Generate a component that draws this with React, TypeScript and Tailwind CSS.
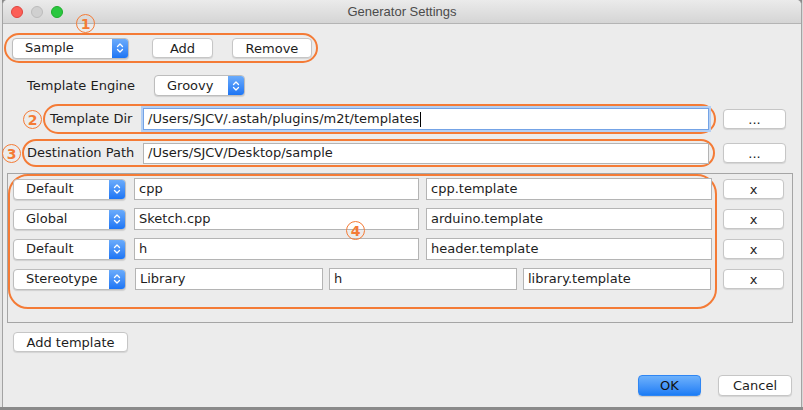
import React from 'react'

const ui = { fontFamily: '"DejaVu Sans", Verdana, sans-serif' }

function Mark({ n, className }: { n: string; className: string }) {
  return (
    <div className={`absolute w-[19px] h-[19px] rounded-full border-[1.5px] border-[#f47b36] text-[#f47b36] flex items-center justify-center text-[14px] font-bold leading-none ${className}`}>
      {n}
    </div>
  )
}

function Combo({ label, w }: { label: string; w: string }) {
  return (
    <div className={`${w} h-[21px] flex rounded-[4px] border border-[#bdbdbd] bg-white shadow-[0_1px_1px_rgba(0,0,0,0.12)] overflow-hidden`}>
      <div className="flex-1 flex items-center pl-[12px] text-[#1d1d1d]">{label}</div>
      <div className="w-[16px] flex items-center justify-center bg-gradient-to-b from-[#6aabfb] to-[#1c75f4]">
        <svg width="8" height="12" viewBox="0 0 8 12">
          <path d="M1.5 4.5 L4 2 L6.5 4.5 M1.5 7.5 L4 10 L6.5 7.5" fill="none" stroke="white" strokeWidth="1.3" strokeLinecap="round" strokeLinejoin="round" />
        </svg>
      </div>
    </div>
  )
}

function Btn({ children, w, h = 'h-[20px]' }: { children: React.ReactNode; w: string; h?: string }) {
  return (
    <button className={`${w} ${h} shrink-0 rounded-[4px] border border-[#c6c6c6] bg-white shadow-[0_1px_1px_rgba(0,0,0,0.1)] text-[#1d1d1d] flex items-center justify-center leading-none`}>
      {children}
    </button>
  )
}

function Field({ value, w, ml = '' }: { value: string; w: string; ml?: string }) {
  return (
    <div className={`${w} ${ml} h-[22px] shrink-0 border border-[#b4b4b4] bg-white flex items-center pl-[4px] text-[#1d1d1d] whitespace-nowrap overflow-hidden`}>
      {value}
    </div>
  )
}

const rows = [
  { kind: 'Default', cols: ['cpp', 'cpp.template'] },
  { kind: 'Global', cols: ['Sketch.cpp', 'arduino.template'] },
  { kind: 'Default', cols: ['h', 'header.template'] },
]

export default function App() {
  return (
    <div className="w-[803px] h-[410px] bg-[#8a8a8a] flex flex-col text-[13px]" style={ui}>
      <div className="flex h-[407px]">
        <div className="w-[2px] bg-[#e4e4e4]" />
        <div className="relative w-[800px] border-x border-[#a3a3a3] bg-[#ececec] rounded-t-[5px] flex flex-col">
          {/* title bar */}
          <div className="h-[24px] shrink-0 border-b border-[#b4b4b4] rounded-t-[5px] bg-gradient-to-b from-[#ebebeb] to-[#d5d5d5] flex items-center relative">
            <div className="flex gap-[8px] pl-[8px]">
              <div className="w-[12px] h-[12px] rounded-full bg-[#fc5f57] border border-[#e0443e]" />
              <div className="w-[12px] h-[12px] rounded-full bg-[#d0d0d0] border border-[#bcbcbc]" />
              <div className="w-[12px] h-[12px] rounded-full bg-[#2ac73f] border border-[#1dad2b]" />
            </div>
            <div className="absolute inset-0 flex items-center justify-center text-[13px] text-[#4b4b4b]" style={{ fontFamily: '"Liberation Sans", Arial, sans-serif' }}>
              Generator Settings
            </div>
          </div>

          {/* profile row */}
          <div className="mt-[9px] ml-[1px] w-[314px] h-[30px] rounded-[15px] border-2 border-[#f47b36] flex items-center pl-[6px]">
            <Combo label="Sample" w="w-[117px]" />
            <div className="ml-[23px]"><Btn w="w-[61px]">Add</Btn></div>
            <div className="ml-[19px]"><Btn w="w-[80px]">Remove</Btn></div>
          </div>

          {/* template engine */}
          <div className="mt-[12px] h-[21px] flex items-center pl-[24px]">
            <div className="w-[127px] text-[#1d1d1d]">Template Engine</div>
            <Combo label="Groovy" w="w-[91px]" />
          </div>

          {/* template dir */}
          <div className="mt-[8px] flex items-center">
            <div className="ml-[40px] w-[673px] h-[30px] rounded-[15px] border-2 border-[#f47b36] flex items-center pl-[5px]">
              <div className="w-[93px] text-[#1d1d1d]">Template Dir</div>
              <div className="w-[566px] h-[22px] border border-[#74a3e6] shadow-[0_0_0_2px_#b3cff4] bg-white flex items-center pl-[4px] text-[#1d1d1d] whitespace-nowrap">
                /Users/SJCV/.astah/plugins/m2t/templates
                <span className="inline-block w-px h-[15px] bg-black ml-px" />
              </div>
            </div>
            <div className="ml-[7px]"><Btn w="w-[63px]">...</Btn></div>
          </div>

          {/* destination path */}
          <div className="mt-[5px] flex items-center">
            <div className="ml-[19px] w-[693px] h-[28px] rounded-[14px] border-2 border-[#f47b36] flex items-center pl-[3px]">
              <div className="w-[116px] text-[#1d1d1d]">Destination Path</div>
              <div className="w-[566px] h-[21px] border border-[#b4b4b4] bg-white flex items-center pl-[4px] text-[#1d1d1d] whitespace-nowrap">
                /Users/SJCV/Desktop/sample
              </div>
            </div>
            <div className="ml-[8px]"><Btn w="w-[63px]">...</Btn></div>
          </div>

          {/* templates table */}
          <div className="mt-[6px] ml-[4px] w-[786px] h-[150px] border border-[#a5a5a5] flex">
            <div className="w-[709px] h-[135px] rounded-[20px] border-2 border-[#f47b36] pt-[2px] pl-[3px] flex flex-col gap-[8px]">
              {rows.map((r, i) => (
                <div key={i} className="h-[22px] flex items-center">
                  <Combo label={r.kind} w="w-[113px]" />
                  <Field value={r.cols[0]} w="w-[285px]" ml="ml-[8px]" />
                  <Field value={r.cols[1]} w="w-[286px]" ml="ml-[7px]" />
                </div>
              ))}
              <div className="h-[22px] flex items-center">
                <Combo label="Stereotype" w="w-[113px]" />
                <Field value="Library" w="w-[188px]" ml="ml-[9px]" />
                <Field value="h" w="w-[188px]" ml="ml-[6px]" />
                <Field value="library.template" w="w-[188px]" ml="ml-[6px]" />
              </div>
            </div>
            <div className="ml-[6px] pt-[5px] flex flex-col gap-[10px]">
              {[0, 1, 2, 3].map(i => (
                <Btn key={i} w="w-[61px]">x</Btn>
              ))}
            </div>
          </div>

          <div className="mt-[9px] ml-[10px]">
            <Btn w="w-[115px]">Add template</Btn>
          </div>

          <div className="mt-[23px] flex justify-end pr-[9px] gap-[17px]">
            <button className="w-[63px] h-[21px] rounded-[4px] border border-[#2f86f3] bg-gradient-to-b from-[#6db1fb] to-[#1a7cf5] text-[#111] shadow-[0_1px_1px_rgba(0,0,0,0.15)] flex items-center justify-center leading-none">
              OK
            </button>
            <Btn w="w-[74px]" h="h-[21px]">Cancel</Btn>
          </div>

          <Mark n="1" className="left-[73px] top-[14px]" />
          <Mark n="2" className="left-[20px] top-[110px]" />
          <Mark n="3" className="left-[-1px] top-[144px]" />
          <Mark n="4" className="left-[343px] top-[221px] border-[#f8a36f] text-[#f8a36f]" />
        </div>
        <div className="w-px bg-[#d8d8d8]" />
      </div>
    </div>
  )
}
